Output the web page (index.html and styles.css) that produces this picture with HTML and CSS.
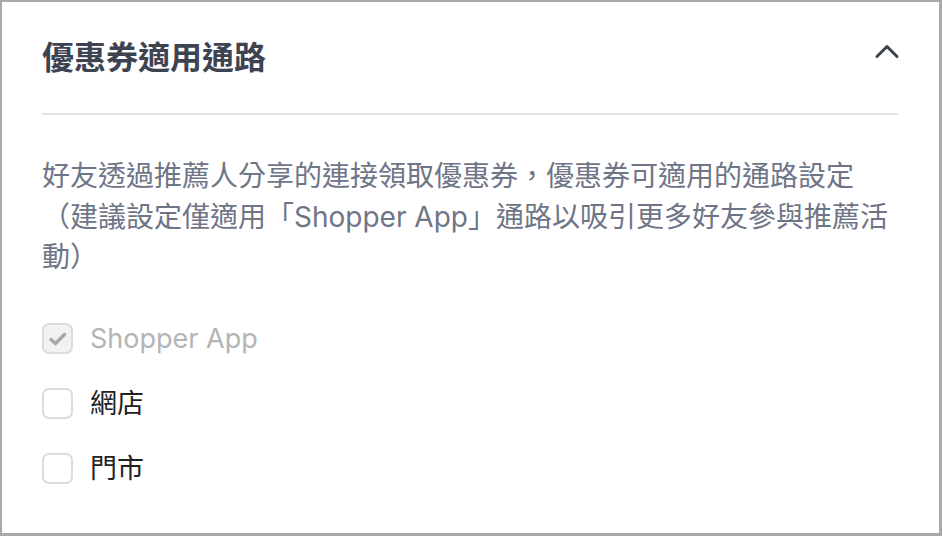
FILE: index.html
```html
<!DOCTYPE html>
<html lang="zh-Hant">
<head>
	<meta charset="UTF-8">
	<title>優惠券適用通路</title>
	<link rel="stylesheet" href="styles.css">
</head>
<body>
	<div class="panel">
		<div class="head">
			<h2 class="title">優惠券適用通路</h2>
			<button class="toggle" type="button" aria-label="收合">
				<svg width="26" height="16" viewBox="0 0 26 16">
					<path d="M3 13.5 L13 3.5 L23 13.5" fill="none" stroke="#3d4351" stroke-width="3" stroke-linecap="round" stroke-linejoin="round"/>
				</svg>
			</button>
		</div>
		<p class="desc">好友透過推薦人分享的連接領取優惠券，優惠券可適用的通路設定（建議設定僅適用「Shopper App」通路以吸引更多好友參與推薦活動）</p>
		<ul class="channels">
			<li class="channel disabled">
				<span class="box checked">
					<svg width="20" height="16" viewBox="0 0 20 16">
						<path d="M3 8.5 L7.5 12.5 L16.5 3.5" fill="none" stroke="#a8a8a8" stroke-width="3.4" stroke-linecap="round" stroke-linejoin="round"/>
					</svg>
				</span>
				<span class="label">Shopper App</span>
			</li>
			<li class="channel">
				<span class="box"></span>
				<span class="label">網店</span>
			</li>
			<li class="channel">
				<span class="box"></span>
				<span class="label">門市</span>
			</li>
		</ul>
	</div>
</body>
</html>
```

FILE: styles.css
```css
* {
	margin: 0;
	padding: 0;
	box-sizing: border-box;
}
html, body {
	height: 100%;
}
body {
	background: #fff;
	font-family: "Inter", "Noto Sans CJK TC", sans-serif;
}
.panel {
	height: 536px;
	border: solid #a9a9a9;
	border-width: 2px 3px 3px 2px;
	padding: 0 41px 0 40px;
	background: #fff;
}
.head {
	height: 113px;
	padding-bottom: 5px;
	border-bottom: 2px solid #dde4ea;
	display: flex;
	align-items: center;
	justify-content: space-between;
}
.title {
	font-family: "Noto Sans CJK TC", sans-serif;
	font-size: 32px;
	font-weight: 700;
	line-height: 40px;
	color: #3d4351;
}
.toggle {
	border: 0;
	background: none;
	display: flex;
	margin-right: -2px;
	margin-top: -8px;
}
.desc {
	margin-top: 41px;
	font-size: 28px;
	line-height: 40.5px;
	color: #6e7586;
}
.channels {
	list-style: none;
	margin-top: 45px;
	display: flex;
	flex-direction: column;
	gap: 33px;
}
.channel {
	height: 32px;
	display: flex;
	align-items: center;
	gap: 17px;
}
.box {
	width: 31px;
	height: 31px;
	border: 2px solid #dcdcdc;
	border-radius: 7px;
	background: #fff;
	display: flex;
	align-items: center;
	justify-content: center;
}
.box.checked {
	background: #f2f2f2;
}
.label {
	font-size: 27px;
	line-height: 32px;
	color: #222;
}
.disabled .label {
	color: #b4b4b4;
}
```
